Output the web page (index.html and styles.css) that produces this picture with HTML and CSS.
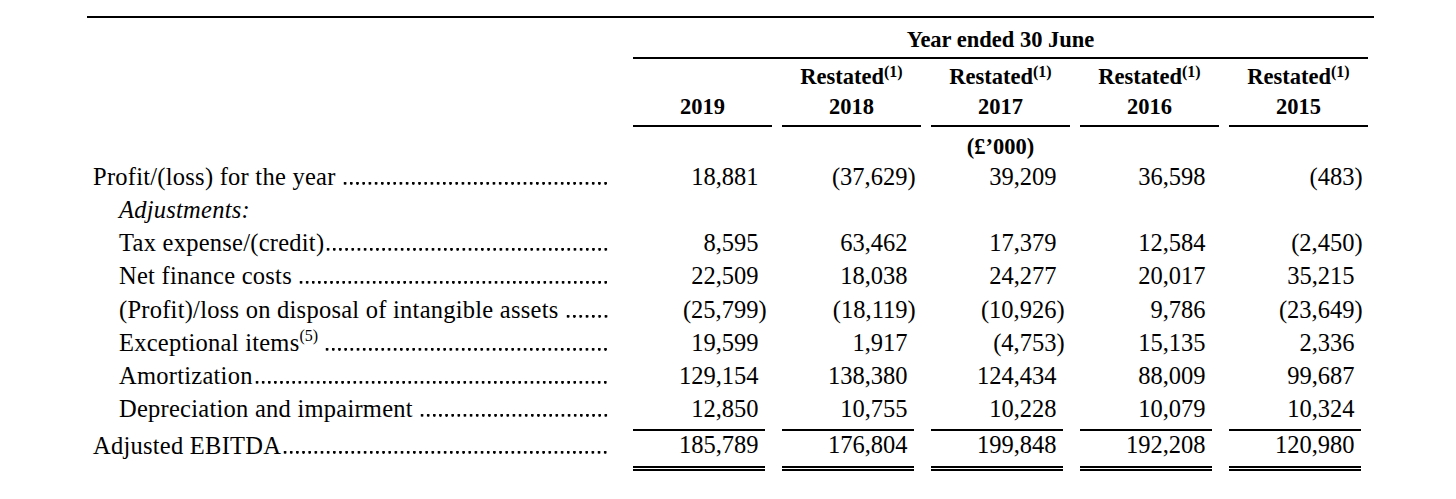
FILE: index.html
```html
<!DOCTYPE html>
<html lang="en">
<head>
<meta charset="utf-8">
<title>Adjusted EBITDA reconciliation</title>
<link rel="stylesheet" href="styles.css">
</head>
<body>
<div class="table">
  <div class="row r-period">
    <div class="period">Year ended 30 June</div>
  </div>
  <div class="row r-head">
    <div class="h first"><div class="hl"></div><div class="hl">2019</div></div>
    <div class="h"><div class="hl">Restated<sup>(1)</sup></div><div class="hl">2018</div></div>
    <div class="h"><div class="hl">Restated<sup>(1)</sup></div><div class="hl">2017</div></div>
    <div class="h"><div class="hl">Restated<sup>(1)</sup></div><div class="hl">2016</div></div>
    <div class="h"><div class="hl">Restated<sup>(1)</sup></div><div class="hl">2015</div></div>
  </div>
  <div class="row r-unit">
    <div class="unit">(£’000)</div>
  </div>

  <div class="row r">
    <div class="lab"><span class="t">Profit/(loss) for the year</span><span class="dots sp"></span></div>
    <div class="num">18,881</div>
    <div class="num"><span class="neg">(37,629)</span></div>
    <div class="num">39,209</div>
    <div class="num">36,598</div>
    <div class="num"><span class="neg">(483)</span></div>
  </div>
  <div class="row r">
    <div class="lab ind"><span class="t it">Adjustments:</span></div>
  </div>
  <div class="row r">
    <div class="lab ind"><span class="t">Tax expense/(credit)</span><span class="dots"></span></div>
    <div class="num">8,595</div>
    <div class="num">63,462</div>
    <div class="num">17,379</div>
    <div class="num">12,584</div>
    <div class="num"><span class="neg">(2,450)</span></div>
  </div>
  <div class="row r">
    <div class="lab ind"><span class="t">Net finance costs</span><span class="dots sp"></span></div>
    <div class="num">22,509</div>
    <div class="num">18,038</div>
    <div class="num">24,277</div>
    <div class="num">20,017</div>
    <div class="num">35,215</div>
  </div>
  <div class="row r">
    <div class="lab ind"><span class="t">(Profit)/loss on disposal of intangible assets</span><span class="dots sp"></span></div>
    <div class="num"><span class="neg">(25,799)</span></div>
    <div class="num"><span class="neg">(18,119)</span></div>
    <div class="num"><span class="neg">(10,926)</span></div>
    <div class="num">9,786</div>
    <div class="num"><span class="neg">(23,649)</span></div>
  </div>
  <div class="row r">
    <div class="lab ind"><span class="t">Exceptional items<sup>(5)</sup></span><span class="dots sp"></span></div>
    <div class="num">19,599</div>
    <div class="num">1,917</div>
    <div class="num"><span class="neg">(4,753)</span></div>
    <div class="num">15,135</div>
    <div class="num">2,336</div>
  </div>
  <div class="row r">
    <div class="lab ind"><span class="t">Amortization</span><span class="dots"></span></div>
    <div class="num">129,154</div>
    <div class="num">138,380</div>
    <div class="num">124,434</div>
    <div class="num">88,009</div>
    <div class="num">99,687</div>
  </div>
  <div class="row r">
    <div class="lab ind"><span class="t">Depreciation and impairment</span><span class="dots sp"></span></div>
    <div class="num">12,850</div>
    <div class="num">10,755</div>
    <div class="num">10,228</div>
    <div class="num">10,079</div>
    <div class="num">10,324</div>
  </div>
  <div class="row r r-total">
    <div class="lab"><span class="t">Adjusted EBITDA</span><span class="dots"></span></div>
    <div class="num">185,789</div>
    <div class="num">176,804</div>
    <div class="num">199,848</div>
    <div class="num">192,208</div>
    <div class="num">120,980</div>
  </div>
</div>
</body>
</html>
```

FILE: styles.css
```css
html, body {
  margin: 0;
  padding: 0;
  background: #ffffff;
}

body {
  color: #000000;
  font-family: "Liberation Serif", "Times New Roman", Times, serif;
}

.table {
  width: 1287px;
  margin: 16px 0 0 87px;
  border-top: 2px solid #000000;
}

.row {
  display: grid;
  grid-template-columns: 536px repeat(5, 139px);
  column-gap: 10px;
}

/* ---------- header ---------- */
.period {
  grid-column: 2 / 7;
  text-align: center;
  font-weight: bold;
  font-size: 22.5px;
  line-height: 26px;
  padding: 9.4px 0 3.6px;
  border-bottom: 2px solid #000000;
}

.h {
  text-align: center;
  font-weight: bold;
  font-size: 22.5px;
  line-height: 30px;
  padding: 3.4px 0 2.6px;
  border-bottom: 2px solid #000000;
}

.h.first {
  grid-column: 2;
}

.hl {
  height: 30px;
  white-space: nowrap;
}

.h sup {
  font-size: 16px;
  line-height: 0;
  vertical-align: 7px;
}

.unit {
  grid-column: 4;
  text-align: center;
  font-weight: bold;
  font-size: 22.5px;
  line-height: 26px;
  padding-top: 7px;
}

/* ---------- body rows ---------- */
.r {
  font-size: 24.5px;
  line-height: 33.14px;
}

.lab {
  display: flex;
  align-self: start;
  white-space: nowrap;
  padding: 0 14px 0 6px;
}

.lab.ind {
  padding-left: 32px;
}

.t {
  flex: none;
  letter-spacing: 0.25px;
}

.it {
  font-style: italic;
}

.lab sup {
  font-size: 16px;
  line-height: 0;
  vertical-align: 10px;
  letter-spacing: 0;
}

/* dot leader: a row of round periods sitting on the text baseline */
.dots {
  flex: 1 1 auto;
  min-width: 0;
  margin-left: 1px;
  background-image: radial-gradient(circle at 50% 23.4px, #000000 1.15px, rgba(0, 0, 0, 0) 1.75px);
  background-size: 6.1px 33.14px;
  background-repeat: space no-repeat;
  background-position: right top;
}

.dots.sp {
  margin-left: 6px;
}

.num {
  width: 132px;
  box-sizing: border-box;
  text-align: right;
  padding-right: 6.5px;
  white-space: nowrap;
  align-self: start;
}

.neg {
  margin-right: -8.16px;
}

/* ---------- total row ---------- */
.r-total .lab {
  padding-top: 3.9px;
}

.r-total .num {
  margin-top: 4px;
  border-top: 2px solid #000000;
  line-height: 28.86px;
  padding-bottom: 5.8px;
  border-bottom: 5px double #000000;
}
```
